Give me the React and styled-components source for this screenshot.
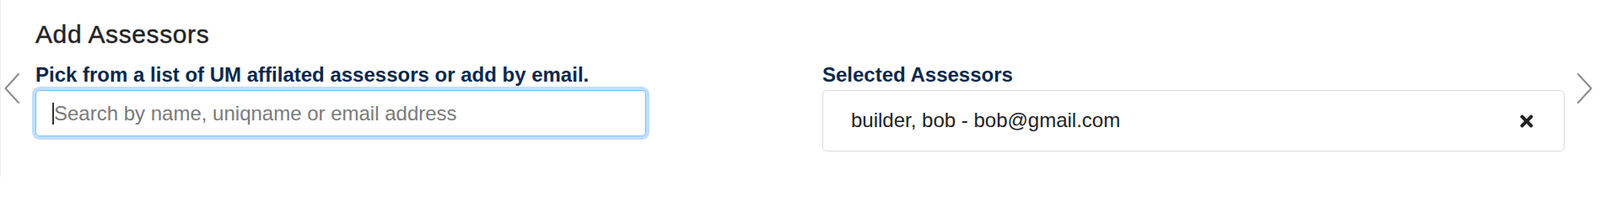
import React from "react";
import styled, { createGlobalStyle } from "styled-components";
import { FaTimes } from "react-icons/fa";

const GlobalStyle = createGlobalStyle`
  html, body {
    margin: 0;
    padding: 0;
    background: #ffffff;
  }
  body {
    font-family: "Liberation Sans", Arial, Helvetica, sans-serif;
    color: #222222;
  }
`;

const Carousel = styled.div`
  display: flex;
  align-items: center;
  gap: 15px;
  height: 210px;
  box-sizing: border-box;
  padding: 0 9px 0 5px;
  border-left: 1px solid #ececec;
`;

const Arrow = styled.button`
  flex: none;
  display: flex;
  width: 18px;
  height: 36px;
  padding: 0;
  border: 0;
  background: none;
  cursor: pointer;
  color: #8c8c8c;
  margin-left: ${(p) => (p.$side === "left" ? "-1px" : "0")};
`;

const Slide = styled.section`
  flex: 1;
  min-width: 0;
  padding: 0 0 7px 4px;
`;

const Title = styled.h2`
  margin: 0 0 15px;
  font-size: 30px;
  line-height: 36px;
  font-weight: 400;
  letter-spacing: 0.6px;
  color: #222222;
  -webkit-text-stroke: 0.4px #222222;
`;

const Columns = styled.div`
  display: grid;
  grid-template-columns: 724px 1fr;
  column-gap: 209px;
`;

const Field = styled.div`
  display: flex;
  flex-direction: column;
  gap: 4px;
`;

const Label = styled.label`
  font-size: 24px;
  line-height: 29px;
  font-weight: 700;
  color: #08294c;
`;

const InputWrap = styled.div`
  position: relative;
`;

/* the text cursor sitting at the start of the focused, empty search box */
const Caret = styled.span`
  position: absolute;
  left: 20px;
  top: 15px;
  width: 1.5px;
  height: 26px;
  background: #333333;
  pointer-events: none;
`;

const SearchInput = styled.input`
  box-sizing: border-box;
  width: 100%;
  height: 55px;
  padding: 0 20px 0 21px;
  border: 1px solid #80bdff;
  border-radius: 5px;
  box-shadow: 0 0 0 4px rgba(0, 123, 255, 0.25);
  outline: none;
  font-family: inherit;
  font-size: 24px;
  color: #333333;
  caret-color: transparent;
  &::placeholder {
    color: #7a7a7a;
  }
`;

const SelectedBox = styled.ul`
  box-sizing: border-box;
  margin: 0;
  padding: 0 33px 3px;
  list-style: none;
  height: 73px;
  border: 1px solid #dcdcdc;
  border-radius: 5px;
  display: flex;
  flex-direction: column;
  justify-content: center;
`;

const SelectedItem = styled.li`
  display: flex;
  align-items: center;
  justify-content: space-between;
  font-size: 24px;
  line-height: 29px;
  color: #222222;
`;

const RemoveButton = styled.button`
  display: flex;
  padding: 0;
  border: 0;
  background: none;
  color: #222222;
  cursor: pointer;
  margin-top: 3px;
`;

const Chevron = ({ direction }) => (
  <svg width="18" height="36" viewBox="0 0 18 36" fill="none">
    <polyline
      points={direction === "left" ? "17,1 1.5,18 17,35" : "1,1 16.5,18 1,35"}
      stroke="currentColor"
      strokeWidth="2"
      strokeLinecap="round"
      strokeLinejoin="round"
    />
  </svg>
);

const assessors = [{ id: 1, name: "builder, bob", email: "bob@gmail.com" }];

const App = () => {
  return (
    <>
      <GlobalStyle />
      <Carousel>
        <Arrow $side="left" aria-label="Previous">
          <Chevron direction="left" />
        </Arrow>
        <Slide>
          <Title>Add Assessors</Title>
          <Columns>
            <Field>
              <Label htmlFor="assessor-search">
                Pick from a list of UM affilated assessors or add by email.
              </Label>
              <InputWrap>
                <SearchInput
                  id="assessor-search"
                  type="text"
                  placeholder="Search by name, uniqname or email address"
                />
                <Caret />
              </InputWrap>
            </Field>
            <Field>
              <Label as="div">Selected Assessors</Label>
              <SelectedBox>
                {assessors.map((a) => (
                  <SelectedItem key={a.id}>
                    <span>
                      {a.name} - {a.email}
                    </span>
                    <RemoveButton aria-label="Remove">
                      <FaTimes size={22} />
                    </RemoveButton>
                  </SelectedItem>
                ))}
              </SelectedBox>
            </Field>
          </Columns>
        </Slide>
        <Arrow $side="right" aria-label="Next">
          <Chevron direction="right" />
        </Arrow>
      </Carousel>
    </>
  );
};

export default App;
